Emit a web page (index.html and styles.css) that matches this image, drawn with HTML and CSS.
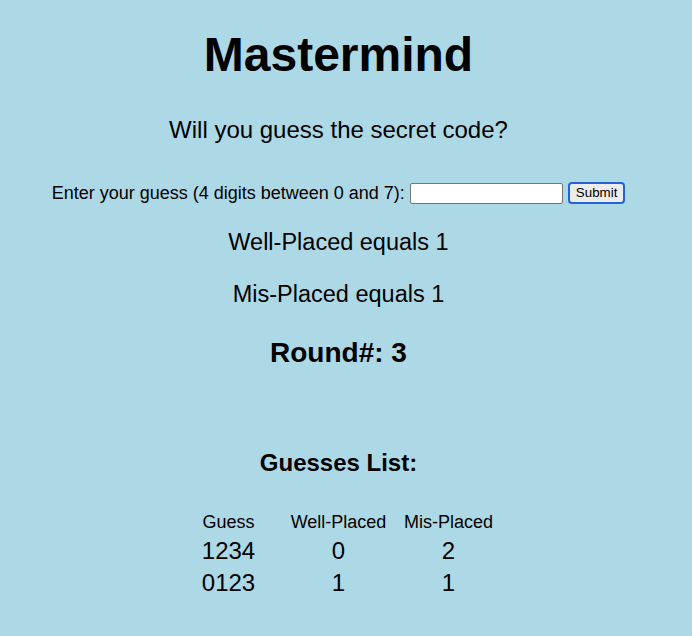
FILE: index.html
```html
<!DOCTYPE html>
<html lang="en">
<head>
<meta charset="utf-8">
<title>Mastermind</title>
<link rel="stylesheet" href="styles.css">
</head>
<body>
<div class="page">
  <h1 class="title">Mastermind</h1>
  <p class="subtitle">Will you guess the secret code?</p>
  <form class="guess-form">
    <label class="guess-label" for="guess">Enter your guess (4 digits between 0 and 7):</label>
    <input class="guess-input" id="guess" type="text">
    <button class="guess-submit" type="button">Submit</button>
  </form>
  <p class="feedback feedback-well">Well-Placed equals 1</p>
  <p class="feedback feedback-mis">Mis-Placed equals 1</p>
  <h2 class="round">Round#: 3</h2>
  <h3 class="list-title">Guesses List:</h3>
  <table class="guesses">
    <thead>
      <tr><th>Guess</th><th>Well-Placed</th><th>Mis-Placed</th></tr>
    </thead>
    <tbody>
      <tr><td>1234</td><td>0</td><td>2</td></tr>
      <tr><td>0123</td><td>1</td><td>1</td></tr>
    </tbody>
  </table>
</div>
</body>
</html>
```
FILE: styles.css
```css
html, body {
  margin: 0;
  padding: 0;
  background: #add8e6;
}
body {
  font-family: "Liberation Sans", Arial, Helvetica, sans-serif;
  color: #000;
}
.page {
  width: 677px;
  display: flex;
  flex-direction: column;
  align-items: center;
  padding-top: 27px;
}
.title {
  margin: 0;
  font-size: 48px;
  line-height: 56px;
  font-weight: bold;
}
.subtitle {
  margin: 33px 0 0;
  font-size: 24px;
  line-height: 28px;
}
.guess-form {
  margin: 37px 0 0;
  height: 24px;
  display: flex;
  align-items: center;
}
.guess-label {
  font-size: 18px;
  line-height: 24px;
  margin-right: 5px;
}
.guess-input {
  box-sizing: border-box;
  width: 153px;
  height: 21px;
  margin: 0 5px 0 0;
  padding: 1px 2px;
  border: 1px solid #767676;
  border-radius: 2px;
  background: #fff;
  font-family: "Liberation Sans", Arial, sans-serif;
  font-size: 13px;
}
.guess-submit {
  box-sizing: border-box;
  height: 22px;
  margin: 0;
  padding: 0 6px;
  border: 2px solid #2563d4;
  border-radius: 4px;
  background: #ececec;
  color: #000;
  font-family: "Liberation Sans", Arial, sans-serif;
  font-size: 13.33px;
  line-height: 18px;
}
.feedback {
  margin: 23px 0 0;
  font-size: 23.5px;
  line-height: 28px;
}
.feedback-mis {
  margin-top: 24px;
}
.round {
  margin: 29px 0 0;
  font-size: 28px;
  line-height: 32px;
  font-weight: bold;
}
.list-title {
  margin: 80px 0 0;
  font-size: 24px;
  line-height: 28px;
  font-weight: bold;
}
.guesses {
  margin: 34px 0 0;
  border-collapse: collapse;
  table-layout: fixed;
  width: 330px;
}
.guesses th {
  width: 110px;
  padding: 0 0 2px;
  font-size: 18px;
  line-height: 22px;
  font-weight: normal;
  text-align: center;
}
.guesses td {
  padding: 0;
  font-size: 24px;
  line-height: 32px;
  text-align: center;
}
```
